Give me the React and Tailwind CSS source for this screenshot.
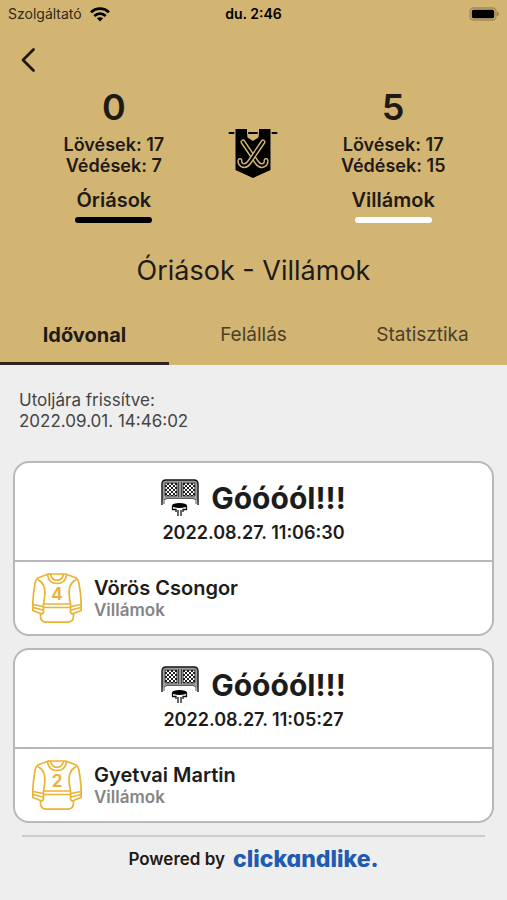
import { useId, useState } from 'react';

const teams = {
  home: { name: 'Óriások', score: 0, shots: 17, saves: 7, barClass: 'bg-black' },
  away: { name: 'Villámok', score: 5, shots: 17, saves: 15, barClass: 'bg-white' },
};

const tabs = ['Idővonal', 'Felállás', 'Statisztika'];

const goals = [
  { id: 1, time: '2022.08.27. 11:06:30', player: 'Vörös Csongor', number: 4, team: 'Villámok' },
  { id: 2, time: '2022.08.27. 11:05:27', player: 'Gyetvai Martin', number: 2, team: 'Villámok' },
];

export default function App() {
  const [activeTab, setActiveTab] = useState('Idővonal');

  return (
    <div className="min-h-screen bg-[#eeeeee] font-['Inter','Liberation_Sans',sans-serif] text-[#1f1a17]">
      <header className="bg-[#d2b572]">
        <StatusBar />

        <div className="flex h-16 items-center px-4">
          <button type="button" aria-label="Vissza" className="flex h-8 w-6 items-center justify-center">
            <svg viewBox="0 0 16 26" className="h-[26px] w-4" fill="none" stroke="#1c1711" strokeWidth="2.8" strokeLinecap="round" strokeLinejoin="round">
              <path d="M13.5 2.5 3 13l10.5 10.5" />
            </svg>
          </button>
        </div>

        <div className="grid grid-cols-3 px-11">
          <TeamScore team={teams.home} />
          <div className="flex items-start justify-center pt-[37px]">
            <PennantIcon />
          </div>
          <TeamScore team={teams.away} />
        </div>

        <h1 className="mt-8 text-center text-[27px] leading-8">
          {teams.home.name} - {teams.away.name}
        </h1>

        <nav role="tablist" className="mt-5 grid grid-cols-3">
          {tabs.map((tab) => (
            <button
              key={tab}
              type="button"
              role="tab"
              aria-selected={activeTab === tab}
              onClick={() => setActiveTab(tab)}
              className={`h-[58px] border-b-3 leading-6 ${
                activeTab === tab ? 'border-[#2a2320] text-[20px] font-bold' : 'border-transparent text-[19px] text-[#4a3f2b]'
              }`}
            >
              {tab}
            </button>
          ))}
        </nav>
      </header>

      <main className="px-[13px]">
        <p className="px-[6px] pt-[25px] text-[17px] leading-[21px] text-[#444444]">
          Utoljára frissítve:
          <br />
          2022.09.01. 14:46:02
        </p>

        <div className="mt-[29px] space-y-3">
          {goals.map((goal) => (
            <GoalCard key={goal.id} goal={goal} />
          ))}
        </div>
      </main>

      <footer className="px-[22px] pt-3">
        <div className="h-[2px] bg-[#cccccc]" />
        <div className="flex items-center justify-center gap-2 pt-[6px] pb-6">
          <span className="text-[17px] leading-8 font-semibold">Powered by</span>
          <a
            href="#clickandlike"
            className="text-[23px] leading-8 font-extrabold text-[#1f5bb0] [font-feature-settings:'cv11']"
          >
            clickandlike.
          </a>
        </div>
      </footer>
    </div>
  );
}

function StatusBar() {
  return (
    <div className="grid h-7 grid-cols-3 items-center px-2 text-sm text-black">
      <div className="flex items-center gap-2 text-[#33291a]">
        Szolgáltató
        <svg viewBox="0 0 20 15" className="h-[15px] w-5" fill="none" stroke="#000" strokeWidth="2.7">
          <path d="M1 5.4C6 .4 14 .4 19 5.4" />
          <path d="M4.3 9c3.2-3.1 8.2-3.1 11.4 0" />
          <path d="M10 14.4 6.9 11.3c1.8-1.5 4.4-1.5 6.2 0z" fill="#000" stroke="none" />
        </svg>
      </div>
      <div className="text-center font-semibold">du. 2:46</div>
      <div className="flex justify-end">
        <svg viewBox="0 0 30 14" className="h-[14px] w-[30px]">
          <rect x="1" y="1" width="26" height="12" rx="3.5" fill="none" stroke="#a08a58" strokeWidth="1.4" />
          <rect x="2.8" y="2.8" width="22.4" height="8.4" rx="1.6" fill="#000" />
          <path d="M28.2 4.8c2 .6 2 3.8 0 4.4z" fill="#8f7b4f" />
        </svg>
      </div>
    </div>
  );
}

function TeamScore({ team }) {
  return (
    <div className="flex flex-col items-center text-center whitespace-nowrap">
      <p className="text-4xl leading-[30px] font-semibold">{team.score}</p>
      <p className="mt-3 text-[18px] leading-[21px] font-semibold">
        Lövések: {team.shots}
        <br />
        Védések: {team.saves}
      </p>
      <p className="mt-3 text-[20px] leading-6 font-semibold">{team.name}</p>
      <div className={`mt-[5px] h-[6px] w-[77px] rounded-full ${team.barClass}`} />
    </div>
  );
}

function GoalCard({ goal }) {
  return (
    <article className="overflow-hidden rounded-2xl border-2 border-[#b8b8b8] bg-white text-[#1c1c1c]">
      <div className="border-b-2 border-[#b8b8b8] pt-[15px] pb-4 text-center">
        <h2 className="flex items-center justify-center gap-3 text-[30px] leading-10 font-bold">
          <GoalIcon />
          Góóóól!!!
        </h2>
        <p className="mt-1 text-[18px] leading-[22px] font-semibold">{goal.time}</p>
      </div>
      <div className="flex items-center gap-3 px-[17px] py-[11px]">
        <JerseyIcon number={goal.number} />
        <div>
          <h3 className="text-[20px] leading-6 font-semibold">{goal.player}</h3>
          <p className="text-[17px] leading-5 font-semibold text-[#858585]">{goal.team}</p>
        </div>
      </div>
    </article>
  );
}

function PennantIcon() {
  return (
    <svg viewBox="0 0 50 50" className="h-[50px] w-[50px]" fill="none" strokeLinecap="round" strokeLinejoin="round">
      <path d="M7.5 0H19v4l.5 4.5L25 12l5.500-3.500L31 4V0h11.500v41L25 49 7.500 41z" fill="#000" />
      <path d="M1.500 4h4M44.500 4h4M21 4h8" stroke="#000" strokeWidth="2" />
      <path d="M15 13 28.500 33q3.500 5 7.500 3 2.500-1.500 2-4.500" stroke="#d2b572" strokeWidth="5" />
      <path d="M15 13 28.500 33q3.500 5 7.500 3 2.500-1.500 2-4.500" stroke="#000" strokeWidth="2.200" />
      <path d="M35 13 21.500 33q-3.500 5-7.500 3-2.500-1.500-2-4.500" stroke="#d2b572" strokeWidth="5" />
      <path d="M35 13 21.500 33q-3.500 5-7.500 3-2.500-1.500-2-4.500" stroke="#000" strokeWidth="2.200" />
    </svg>
  );
}

function GoalIcon() {
  const netId = useId();

  return (
    <svg viewBox="0 0 38 38" className="h-[38px] w-[38px] shrink-0" fill="none" stroke="#111">
      <defs>
        <pattern id={netId} width="4" height="4" patternUnits="userSpaceOnUse" x="4" y="4">
          <rect width="4" height="4" fill="#222" stroke="none" />
          <path d="M0 0h2v2H0zM2 2h2v2H2z" fill="#fff" stroke="none" />
        </pattern>
      </defs>
      <path d="M2.200 20V5Q2.200 2.300 5 2.300h28Q35.800 2.300 35.800 5v15l-3-1.200H5.200z" stroke="#9a9a9a" strokeWidth="2" />
      <path d="M1 26V5Q1 1 5 1h28q4 0 4 4v21" strokeWidth="1.400" />
      <path d="M3 25v-4l3-1.600h26l3 1.600v4" stroke="#555" strokeWidth="1" />
      <path d="M19 2v17" stroke="#9a9a9a" strokeWidth="2" />
      <path d="M17.500 3v15M20.500 3v15" stroke="#444" strokeWidth="1" />
      <rect x="4" y="4" width="12" height="13" fill={`url(#${netId})`} strokeWidth="1" />
      <rect x="22" y="4" width="12" height="13" fill={`url(#${netId})`} strokeWidth="1" />
      <ellipse cx="18.500" cy="26.500" rx="7.500" ry="2.500" fill="#000" stroke="none" />
      <path d="M11.500 27v3.500h3.500V33M25.500 27v3.500H22V33M17 31v6M20 31v6" strokeWidth="1.300" />
    </svg>
  );
}

function JerseyIcon({ number }) {
  return (
    <svg viewBox="0 0 50 50" className="h-[50px] w-[50px] shrink-0" fill="none" stroke="#eab333" strokeWidth="1.700" strokeLinejoin="round" strokeLinecap="round">
      <path d="M16.500 1h17l9.500 3.500q3 1 4 6 2 11 2.200 20.500v6.500l-9 3.500-1.700-1.500V31Q36 19 38 13.500 39.500 9 43.500 7" />
      <path d="M16.500 1 7 4.500q-3 1-4 6Q1 21.500.8 31v6.500l9 3.500 1.700-1.500V31Q14 19 12 13.500 10.500 9 6.500 7" />
      <path d="M15.500 1.500q1 9 9.500 9t9.500-9M18.500 1.500q1.500 5.800 6.500 5.800t6.500-5.800" />
      <path d="M12 31h26M11.500 34.500h27M1 31.500l10 2M1 34.500l10 2.500M49 31.500l-10 2M49 34.500l-10 2.500" />
      <path d="M8.500 41v2q0 6.200 6 6.200h21q6 0 6-6.200v-2" />
      <text
        x="25"
        y="26.500"
        textAnchor="middle"
        className="font-['Inter','Liberation_Sans',sans-serif] text-[17px] font-bold"
        fill="#eab333"
        stroke="none"
      >
        {number}
      </text>
    </svg>
  );
}
